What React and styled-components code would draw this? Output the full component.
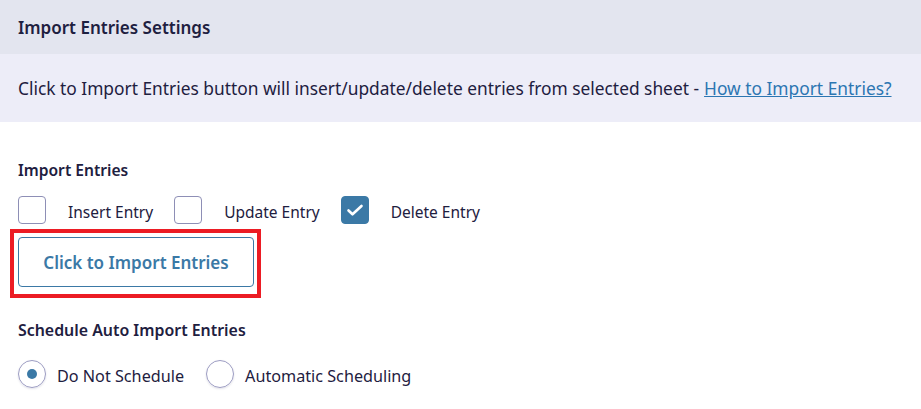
import React from "react";
import styled, { createGlobalStyle } from "styled-components";

const GlobalStyle = createGlobalStyle`
  body {
    margin: 0;
    background: #ffffff;
    font-family: "Noto Sans", "Open Sans", sans-serif;
    color: #1e2040;
  }
`;

const accent = "#3b79a6";

const Page = styled.div`
  width: 921px;
  height: 409px;
  overflow: hidden;
`;

const Header = styled.div`
  height: 54px;
  display: flex;
  align-items: center;
  padding: 0 18px;
  background: #e3e5ef;
  font-size: 17px;
  font-weight: 600;
`;

const Notice = styled.div`
  height: 68px;
  display: flex;
  align-items: center;
  padding: 0 18px;
  background: #ededf8;
  font-size: 17.35px;
  white-space: nowrap;
`;

const HelpLink = styled.a`
  margin-left: 5px;
  color: #2c76b2;
  text-decoration: underline;
`;

const Body = styled.div`
  padding: 0 18px;
`;

const SectionLabel = styled.div`
  font-size: ${(p) => p.$size}px;
  font-weight: 600;
  line-height: 22px;
  margin-top: ${(p) => p.$top}px;
`;

const OptionRow = styled.div`
  display: flex;
  align-items: center;
  margin-top: ${(p) => p.$top}px;
  font-size: ${(p) => p.$size}px;
`;

const Option = styled.label`
  display: flex;
  align-items: center;
  gap: ${(p) => p.$gap}px;
  margin-right: ${(p) => p.$after}px;
`;

const OptionText = styled.span`
  padding-top: 3px;
`;

const Box = styled.span`
  width: 28px;
  height: 28px;
  box-sizing: border-box;
  border-radius: 4px;
  border: 1px solid ${(p) => (p.$checked ? accent : "#8e8fb6")};
  background: ${(p) => (p.$checked ? accent : "#fff")};
  display: flex;
  align-items: center;
  justify-content: center;
`;

const Radio = styled.span`
  width: 28px;
  height: 28px;
  box-sizing: border-box;
  border-radius: 50%;
  border: 1px solid #9c9cc2;
  box-shadow: 0 1px 2px rgba(60, 60, 110, 0.15);
  display: flex;
  align-items: center;
  justify-content: center;
  &::after {
    content: "";
    width: 10px;
    height: 10px;
    border-radius: 50%;
    background: ${(p) => (p.$checked ? accent : "transparent")};
  }
`;

const Highlight = styled.div`
  display: inline-block;
  margin: 5px 0 0 -8px;
  padding: 4px 3px 7px 4px;
  border: 4px solid #ec1c24;
`;

const ImportButton = styled.button`
  width: 236px;
  height: 50px;
  box-sizing: border-box;
  border: 1px solid ${accent};
  border-radius: 4px;
  background: #fff;
  color: ${accent};
  font-family: inherit;
  font-size: 17px;
  font-weight: 600;
  display: block;
`;

const Check = () => (
  <svg width="18" height="18" viewBox="0 0 18 18">
    <path
      d="M2.5 9.5l4 3.8L15.5 5"
      fill="none"
      stroke="#fff"
      strokeWidth="2.6"
      strokeLinecap="round"
      strokeLinejoin="round"
    />
  </svg>
);

export default function App() {
  const entries = [
    { label: "Insert Entry", checked: false },
    { label: "Update Entry", checked: false },
    { label: "Delete Entry", checked: true },
  ];
  const schedules = [
    { label: "Do Not Schedule", checked: true },
    { label: "Automatic Scheduling", checked: false },
  ];

  return (
    <Page>
      <GlobalStyle />
      <Header>Import Entries Settings</Header>
      <Notice>
        Click to Import Entries button will insert/update/delete entries from
        selected sheet -<HelpLink href="#">How to Import Entries?</HelpLink>
      </Notice>
      <Body>
        <SectionLabel $size={15.6} $top={37}>
          Import Entries
        </SectionLabel>
        <OptionRow $size={15.5} $top={15}>
          {entries.map((e) => (
            <Option key={e.label} $gap={22} $after={21}>
              <Box $checked={e.checked}>{e.checked && <Check />}</Box>
              <OptionText>{e.label}</OptionText>
            </Option>
          ))}
        </OptionRow>
        <Highlight>
          <ImportButton>Click to Import Entries</ImportButton>
        </Highlight>
        <SectionLabel $size={15.9} $top={21}>
          Schedule Auto Import Entries
        </SectionLabel>
        <OptionRow $size={16.2} $top={19}>
          {schedules.map((s) => (
            <Option key={s.label} $gap={11} $after={22}>
              <Radio $checked={s.checked} />
              <OptionText>{s.label}</OptionText>
            </Option>
          ))}
        </OptionRow>
      </Body>
    </Page>
  );
}
